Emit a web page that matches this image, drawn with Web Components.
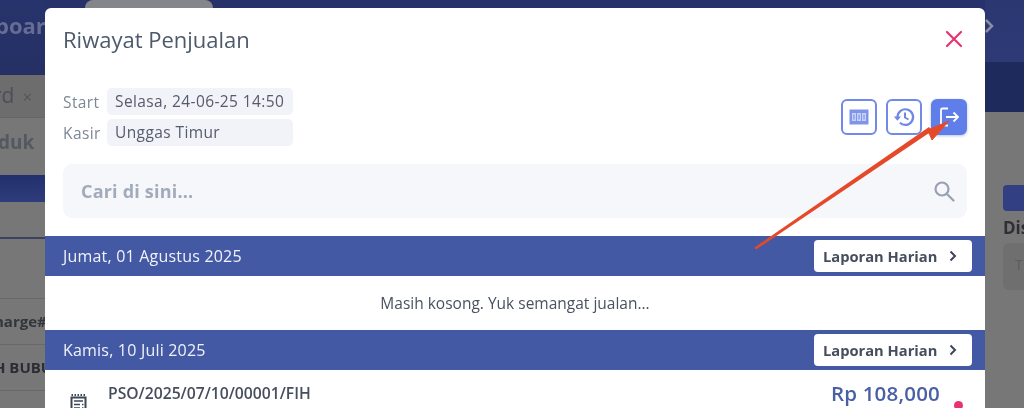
<!DOCTYPE html>
<html lang="id">
<head>
<meta charset="utf-8">
<title>Riwayat Penjualan</title>
<style>
  html, body { margin: 0; padding: 0; background: #767676; }
  body { font-family: "Open Sans", "Noto Sans", sans-serif; overflow: hidden; }
</style>
</head>
<body>
<pos-page>
  <pos-backdrop slot="back"></pos-backdrop>
  <sale-modal slot="modal" heading="Riwayat Penjualan">
    <meta-chip slot="meta" label="Start">Selasa, 24-06-25 14:50</meta-chip>
    <meta-chip slot="meta" label="Kasir">Unggas Timur</meta-chip>
    <icon-button slot="actions" icon="counter"></icon-button>
    <icon-button slot="actions" icon="history"></icon-button>
    <icon-button slot="actions" icon="exit" filled></icon-button>
    <search-box placeholder="Cari di sini..."></search-box>
    <day-band>Jumat, 01 Agustus 2025</day-band>
    <empty-note>Masih kosong. Yuk semangat jualan...</empty-note>
    <day-band>Kamis, 10 Juli 2025</day-band>
    <sale-row code="PSO/2025/07/10/00001/FIH" amount="Rp 108,000"></sale-row>
  </sale-modal>
  <note-arrow slot="over"></note-arrow>
</pos-page>

<script>
const ICONS = {
  counter: `<svg width="22" height="18" viewBox="0 0 22 18"><path fill="#7f95ea" d="M1.500 1.500h19v15h-19z"/><path fill="#c9d3f7" d="M4 5h4v8H4zM9 5h4v8H9zM14 5h4v8h-4z"/><path fill="#6f88e6" d="M5.500 6.500h1v5h-1zM10.500 6.500h1v5h-1zM15.500 6.500h1v5h-1z"/></svg>`,
  history: `<svg width="24" height="24" viewBox="0 0 24 24"><path fill="none" stroke="#6f88e6" stroke-width="2.200" d="M5.500 12a7.800 7.800 0 1 1 2.400 5.700"/><path fill="#6f88e6" d="M1.800 11.500h7.200l-3.600 4.200z"/><path fill="none" stroke="#6f88e6" stroke-width="2" d="M13 7.500V12.500l3.500 2"/></svg>`,
  exit: `<svg width="24" height="24" viewBox="0 0 24 24" fill="none" stroke="#fff" stroke-width="1.800"><path d="M11 3.500H5.500a1.500 1.500 0 0 0-1.500 1.500v14a1.500 1.500 0 0 0 1.500 1.500H11"/><path d="M9 12h12M16.500 7.500 21 12l-4.500 4.500"/></svg>`
};

class PosPage extends HTMLElement {
  constructor() {
    super();
    this.attachShadow({ mode: 'open' }).innerHTML = `
    <style>
      :host{
        display: block;
        position: relative;
        width: 1024px;
        height: 408px;
        overflow: hidden;
      }
      .modal{
        position: absolute;
        left: 45px;
        top: 8px;
        width: 940px;
      }
    </style>
    <slot name="back"></slot>
    <div class="modal"><slot name="modal"></slot></div>
    <slot name="over"></slot>`;
  }
}

class PosBackdrop extends HTMLElement {
  constructor() {
    super();
    this.attachShadow({ mode: 'open' }).innerHTML = `
    <style>
      :host{
        display: flex;
        height: 408px;
        background: #777;
        color: #3b3f4a;
        font-family: "Open Sans", sans-serif;
        font-weight: 700;
        filter: blur(.6px);
        overflow: hidden;
      }
      .left{ width: 45px; overflow: hidden; white-space: nowrap; }
      .mid{ flex: 1; }
      .mid-top{ height: 20px; padding-left: 40px; background: #27326a; }
      .pill{ width: 128px; height: 20px; border-radius: 8px 8px 0 0; background: #85858c; }
      .right{ position: relative; width: 39px; overflow: hidden; white-space: nowrap; }
      .top-left{
        height: 75px;
        box-sizing: border-box;
        padding-top: 10px;
        background: linear-gradient(#27336c, #253064);
        color: #666c93;
        font-size: 22px;
        line-height: 30px;
        text-indent: -5px;
      }
      .tab{
        height: 43px;
        box-sizing: border-box;
        padding-top: 5px;
        background: #6d6d6d;
        color: #4d4f57;
        font-size: 21px;
        font-weight: 400;
        line-height: 30px;
        text-indent: -7px;
        border-bottom: 1px solid #666;
      }
      .tab span{ font-size: 17px; margin-left: 8px; color: #555; }
      .tool{
        height: 57px;
        box-sizing: border-box;
        padding-top: 9px;
        font-size: 19px;
        line-height: 30px;
        color: #555860;
        text-indent: -2px;
      }
      .bar{ height: 27px; background: linear-gradient(#222f6c, #2f3d7d); }
      .gap{ height: 35px; border-bottom: 2px solid #3b4263; }
      .row{
        height: 46px;
        box-sizing: border-box;
        border-bottom: 1px solid #686868;
        font-size: 15px;
        line-height: 45px;
        color: #33353c;
      }
      .row.first{ height: 60px; line-height: 1; }
      .row.a{ text-indent: -6px; }
      .row.b{ text-indent: -6px; color: #2b2d33; }
      .top-right-a{ height: 62px; background: linear-gradient(#2a3770, #2d3a76); }
      .top-right-b{ height: 50px; background: #1e2a5c; }
      .r-body{ padding: 73px 0 0 18px; }
      .r-btn{ height: 26px; border-radius: 4px 0 0 4px; background: #333f83; }
      .r-label{ font-size: 17px; line-height: 20px; margin-top: 7px; color: #2e2f34; }
      .r-input{
        height: 47px;
        margin-top: 5px;
        box-sizing: border-box;
        padding: 12px 0 0 12px;
        border-radius: 6px 0 0 6px;
        background: #6f6f6f;
        color: #5c5c5c;
        font-weight: 400;
        font-size: 14px;
      }
      .chev{ position: absolute; left: 0; top: 19px; }
    </style>
    <div class="left">
      <div class="top-left">board</div>
      <div class="tab">rd<span>×</span></div>
      <div class="tool">duk</div>
      <div class="bar"></div>
      <div class="gap"></div>
      <div class="row first"></div>
      <div class="row a">harge#</div>
      <div class="row b">H BUBUR</div>
      <div class="row"></div>
    </div>
    <div class="mid"><div class="mid-top"><div class="pill"></div></div></div>
    <div class="right">
      <div class="top-right-a"></div>
      <div class="top-right-b"></div>
      <div class="r-body">
        <div class="r-btn"></div>
        <div class="r-label">Disc</div>
        <div class="r-input">T</div>
      </div>
      <svg class="chev" width="9" height="14" viewBox="0 0 9 14"><path d="M1 1l6 6-6 6" fill="none" stroke="#8a8ea6" stroke-width="2.500"/></svg>
    </div>`;
  }
}

class SaleModal extends HTMLElement {
  constructor() {
    super();
    this.attachShadow({ mode: 'open' }).innerHTML = `
    <style>
      :host{
        display: block;
        height: 420px;
        background: #fff;
        border-radius: 6px 6px 0 0;
        filter: blur(.35px);
        font-family: "Open Sans", sans-serif;
      }
      header{
        display: flex;
        justify-content: space-between;
        align-items: center;
        height: 62px;
        padding: 0 22px 0 18px;
      }
      h1{
        margin: 0;
        font-size: 22px;
        font-weight: 400;
        color: #4d5a6b;
      }
      svg{ display: block; }
      .info{
        display: flex;
        justify-content: space-between;
        align-items: center;
        padding: 18px;
      }
      .meta{ display: flex; flex-direction: column; gap: 4px; }
      .actions{ display: flex; gap: 9px; }
    </style>
    <header>
      <h1></h1>
      <svg width="18" height="18" viewBox="0 0 18 18"><path d="M2 2l14 14M16 2 2 16" stroke="#e8336f" stroke-width="2.200" stroke-linecap="round"/></svg>
    </header>
    <div class="info">
      <div class="meta"><slot name="meta"></slot></div>
      <div class="actions"><slot name="actions"></slot></div>
    </div>
    <slot></slot>`;
    this.shadowRoot.querySelector('h1').textContent = this.getAttribute('heading');
  }
}

class MetaChip extends HTMLElement {
  constructor() {
    super();
    this.attachShadow({ mode: 'open' }).innerHTML = `
    <style>
      :host{
        display: flex;
        align-items: center;
        font-size: 15.500px;
        letter-spacing: .4px;
      }
      .label{ width: 44px; color: #7e8794; }
      .chip{
        box-sizing: border-box;
        width: 186px;
        height: 27px;
        padding: 0 8px;
        line-height: 27px;
        white-space: nowrap;
        border-radius: 5px;
        background: #f2f3f9;
        color: #545c6b;
      }
    </style>
    <span class="label"></span>
    <span class="chip"><slot></slot></span>`;
    this.shadowRoot.querySelector('.label').textContent = this.getAttribute('label');
  }
}

class IconButton extends HTMLElement {
  constructor() {
    super();
    this.attachShadow({ mode: 'open' }).innerHTML = `
    <style>
      :host{
        display: flex;
        align-items: center;
        justify-content: center;
        box-sizing: border-box;
        width: 36px;
        height: 36px;
        border: 2px solid #7189e8;
        border-radius: 6px;
        background: #fff;
      }
      :host([filled]){
        border-color: #5f7ee9;
        background: #5f7ee9;
        box-shadow: 0 1px 3px rgba(60, 80, 160, .35);
      }
      svg{ display: block; }
    </style>
    ${ICONS[this.getAttribute('icon')]}`;
  }
}

class SearchBox extends HTMLElement {
  constructor() {
    super();
    this.attachShadow({ mode: 'open' }).innerHTML = `
    <style>
      :host{
        display: flex;
        align-items: center;
        justify-content: space-between;
        height: 54px;
        margin: 0 18px 18px;
        padding: 0 12px 0 18px;
        border-radius: 9px;
        background: #f6f7fb;
      }
      .ph{
        font-size: 18px;
        font-weight: 700;
        letter-spacing: .2px;
        color: #a2abba;
      }
    </style>
    <span class="ph"></span>
    <svg width="22" height="22" viewBox="0 0 22 22" fill="none" stroke="#97a1b1" stroke-width="2.200"><circle cx="9" cy="9" r="6.500"/><path d="M14 14l6.500 6.500" stroke-linecap="round"/></svg>`;
    this.shadowRoot.querySelector('.ph').textContent = this.getAttribute('placeholder');
  }
}

class DayBand extends HTMLElement {
  constructor() {
    super();
    this.attachShadow({ mode: 'open' }).innerHTML = `
    <style>
      :host{
        display: flex;
        align-items: center;
        justify-content: space-between;
        height: 40px;
        padding: 0 13px 0 18px;
        background: #4459a4;
        color: #f0f2fa;
        font-size: 16px;
        letter-spacing: .2px;
      }
      .btn{
        display: flex;
        align-items: center;
        justify-content: space-between;
        box-sizing: border-box;
        width: 158px;
        height: 32px;
        padding: 0 15px 0 9px;
        border-radius: 4px;
        background: #fff;
        color: #454d5e;
        font-size: 14.700px;
        font-weight: 700;
        letter-spacing: 0;
      }
    </style>
    <span><slot></slot></span>
    <span class="btn">Laporan Harian
      <svg width="8" height="12" viewBox="0 0 8 12"><path d="M1.500 1.500 6 6l-4.500 4.500" fill="none" stroke="#3d4556" stroke-width="2"/></svg>
    </span>`;
  }
}

class EmptyNote extends HTMLElement {
  constructor() {
    super();
    this.attachShadow({ mode: 'open' }).innerHTML = `
    <style>
      :host{
        display: block;
        height: 54px;
        line-height: 54px;
        text-align: center;
        font-size: 15.500px;
        color: #4a5260;
      }
    </style>
    <slot></slot>`;
  }
}

class SaleRow extends HTMLElement {
  constructor() {
    super();
    this.attachShadow({ mode: 'open' }).innerHTML = `
    <style>
      :host{
        display: flex;
        justify-content: space-between;
        padding: 13px 45px 0 25px;
      }
      .left{ display: flex; gap: 21px; }
      .icon{ margin-top: 11px; }
      .code{
        font-size: 15.700px;
        font-weight: 600;
        line-height: 20px;
        color: #454d5e;
      }
      .amount{
        font-size: 20.500px;
        font-weight: 600;
        line-height: 20px;
        letter-spacing: .2px;
        color: #4a60a6;
      }
      .dot{
        position: absolute;
        left: 909px;
        top: 393px;
        width: 9px;
        height: 9px;
        border-radius: 50%;
        background: #e8336f;
      }
    </style>
    <span class="left">
      <svg class="icon" width="17" height="20" viewBox="0 0 17 20"><path fill="none" stroke="#3d4556" stroke-width="2" d="M1.500 3.500h14v15.500h-14z"/><path stroke="#3d4556" stroke-width="2" stroke-dasharray="1.500 1.500" d="M1.500 1h14"/><path stroke="#3d4556" stroke-width="1.500" d="M4 7h9M4 10.500h6M12 10.500h1.500M4 14h6M12 14h1.500"/></svg>
      <span class="code"></span>
    </span>
    <span class="amount"></span>
    <span class="dot"></span>`;
    this.shadowRoot.querySelector('.code').textContent = this.getAttribute('code');
    this.shadowRoot.querySelector('.amount').textContent = this.getAttribute('amount');
  }
}

class NoteArrow extends HTMLElement {
  constructor() {
    super();
    this.attachShadow({ mode: 'open' }).innerHTML = `
    <style>
      :host{ position: absolute; left: 0; top: 0; pointer-events: none; }
      svg{ display: block; filter: blur(.3px); }
    </style>
    <svg width="1024" height="408" viewBox="0 0 1024 408">
      <path d="M754.500 247.500 756 249.500 932 131 929 127z" fill="#e5492a"/>
      <path d="M949 121 923 132 929 133 932 140z" fill="#e5492a" stroke="#e5492a" stroke-linejoin="round"/>
    </svg>`;
  }
}

customElements.define('pos-page', PosPage);
customElements.define('pos-backdrop', PosBackdrop);
customElements.define('sale-modal', SaleModal);
customElements.define('meta-chip', MetaChip);
customElements.define('icon-button', IconButton);
customElements.define('search-box', SearchBox);
customElements.define('day-band', DayBand);
customElements.define('empty-note', EmptyNote);
customElements.define('sale-row', SaleRow);
customElements.define('note-arrow', NoteArrow);
</script>
</body>
</html>
